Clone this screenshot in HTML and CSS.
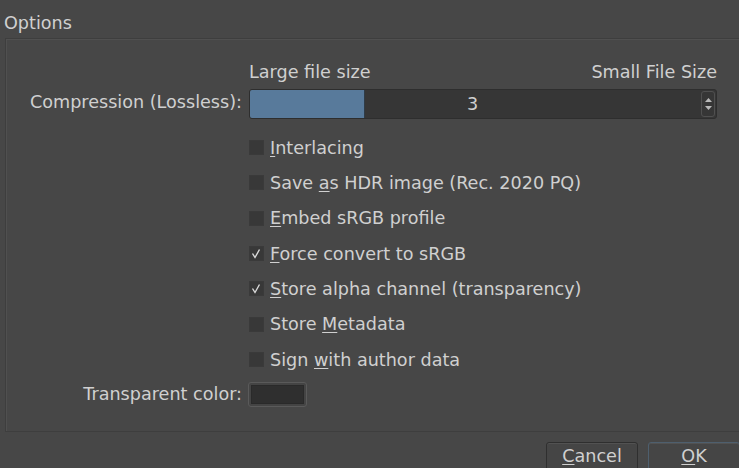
FILE: index.html
```html
<!DOCTYPE html>
<html lang="en">
<head>
    <meta charset="UTF-8">
    <title>Options</title>
    <link rel="stylesheet" href="styles.css">
</head>
<body>

<div class="dialog">
    <div class="group-title">Options</div>

    <div class="group-box">
        <div class="form">
            <div class="label"></div>
            <div class="range-captions">
                <span>Large file size</span>
                <span>Small File Size</span>
            </div>

            <div class="label label-slider">Compression (Lossless):</div>
            <div class="slider">
                <div class="slider-fill" style="width: 114px"></div>
                <div class="slider-value">3</div>
                <div class="spin">
                    <svg width="9" height="22" viewBox="0 0 9 22">
                        <path d="M1 9 L4.5 5 L8 9 Z" fill="#b9b9b9"/>
                        <path d="M1 13 L4.5 17 L8 13 Z" fill="#b9b9b9"/>
                    </svg>
                </div>
            </div>

            <div class="label"></div>
            <div class="checks">
                <label class="check"><span class="box"></span><span><u>I</u>nterlacing</span></label>
                <label class="check"><span class="box"></span><span>Save <u>a</u>s HDR image (Rec. 2020 PQ)</span></label>
                <label class="check"><span class="box"></span><span><u>E</u>mbed sRGB profile</span></label>
                <label class="check">
                    <span class="box"><svg width="13" height="13" viewBox="0 0 13 13"><path d="M2.5 6.5 L5 10.5 L9.5 2.5" fill="none" stroke="#dadada" stroke-width="1.4"/></svg></span>
                    <span><u>F</u>orce convert to sRGB</span>
                </label>
                <label class="check">
                    <span class="box"><svg width="13" height="13" viewBox="0 0 13 13"><path d="M2.5 6.5 L5 10.5 L9.5 2.5" fill="none" stroke="#dadada" stroke-width="1.4"/></svg></span>
                    <span><u>S</u>tore alpha channel (transparency)</span>
                </label>
                <label class="check"><span class="box"></span><span>Store <u>M</u>etadata</span></label>
                <label class="check"><span class="box"></span><span>Sign <u>w</u>ith author data</span></label>
            </div>

            <div class="label label-color">Transparent color:</div>
            <div class="color-row">
                <button class="color-btn"><span class="swatch"></span></button>
            </div>
        </div>
    </div>

    <div class="buttons">
        <button class="btn"><u>C</u>ancel</button>
        <button class="btn btn-default"><u>O</u>K</button>
    </div>
</div>

</body>
</html>
```

FILE: styles.css
```css
html, body {
    margin: 0;
    padding: 0;
    background-color: #474747;
    overflow: hidden;
}

.dialog {
    font-family: 'DejaVu Sans', 'Noto Sans', sans-serif;
    font-size: 17.6px;
    color: #d0d0d0;
    width: 739px;
    height: 468px;
}

.dialog u {
    text-decoration-thickness: 1px;
    text-underline-offset: 2px;
}

.group-title {
    height: 38px;
    line-height: 46px;
    padding-left: 4px;
    box-sizing: border-box;
}

.group-box {
    margin-left: 5px;
    margin-right: -10px;
    height: 394px;
    box-sizing: border-box;
    border: 1px solid #3e3e3e;
    box-shadow: inset 1px 1px 0 #505050;
    padding-top: 23px;
}

.form {
    display: grid;
    grid-template-columns: 236px 468px;
    column-gap: 7px;
    row-gap: 0;
}

.label {
    text-align: right;
}

.range-captions {
    display: flex;
    justify-content: space-between;
    height: 20px;
    line-height: 20px;
}

.label-slider {
    margin-top: 7px;
    line-height: 27px;
}

.slider {
    margin-top: 7px;
    height: 30px;
    box-sizing: border-box;
    background-color: #363636;
    border: 1px solid #2e2e2e;
    border-radius: 3px;
    position: relative;
    display: flex;
    align-items: center;
}

.slider-fill {
    position: absolute;
    left: 0;
    top: 0;
    bottom: 0;
    background-color: #587a9b;
    border-right: 1px solid #2f3c48;
    border-radius: 2px 0 0 2px;
}

.slider-value {
    position: relative;
    flex: 1;
    text-align: center;
    padding-right: 6px;
}

.spin {
    position: relative;
    width: 14px;
    height: 26px;
    margin-right: 1px;
    box-sizing: border-box;
    border: 1px solid #505050;
    border-radius: 3px;
    display: flex;
    align-items: center;
    justify-content: center;
}

.checks {
    margin-top: 11px;
    display: flex;
    flex-direction: column;
}

.check {
    height: 35.33px;
    display: flex;
    align-items: center;
    gap: 6px;
}

.box {
    width: 15px;
    height: 15px;
    background-color: #383838;
    box-sizing: border-box;
    border: 1px solid #3a3a3a;
    display: flex;
    align-items: center;
    justify-content: center;
}

.label-color {
    line-height: 35px;
}

.color-row {
    height: 35px;
    display: flex;
    align-items: center;
}

.color-btn {
    width: 59px;
    height: 25px;
    margin-left: -1px;
    padding: 2px;
    box-sizing: border-box;
    background-color: #444;
    border: 1px solid #5a5a5a;
    border-radius: 3px;
    display: flex;
}

.swatch {
    flex: 1;
    background-color: #2f2f2f;
    border: 1px solid #2a2a2a;
}

.buttons {
    display: flex;
    justify-content: flex-end;
    gap: 10px;
    margin-top: 10px;
    margin-right: -1px;
}

.btn {
    font-family: inherit;
    font-size: 17.6px;
    color: #d0d0d0;
    width: 92px;
    height: 32px;
    background-color: #454545;
    border: 1px solid #2f2f2f;
    border-radius: 3px;
    box-shadow: inset 0 1px 0 #525252;
    padding: 0 0 4px 0;
}

.btn-default {
    border-color: #4e5f6e;
}
```
